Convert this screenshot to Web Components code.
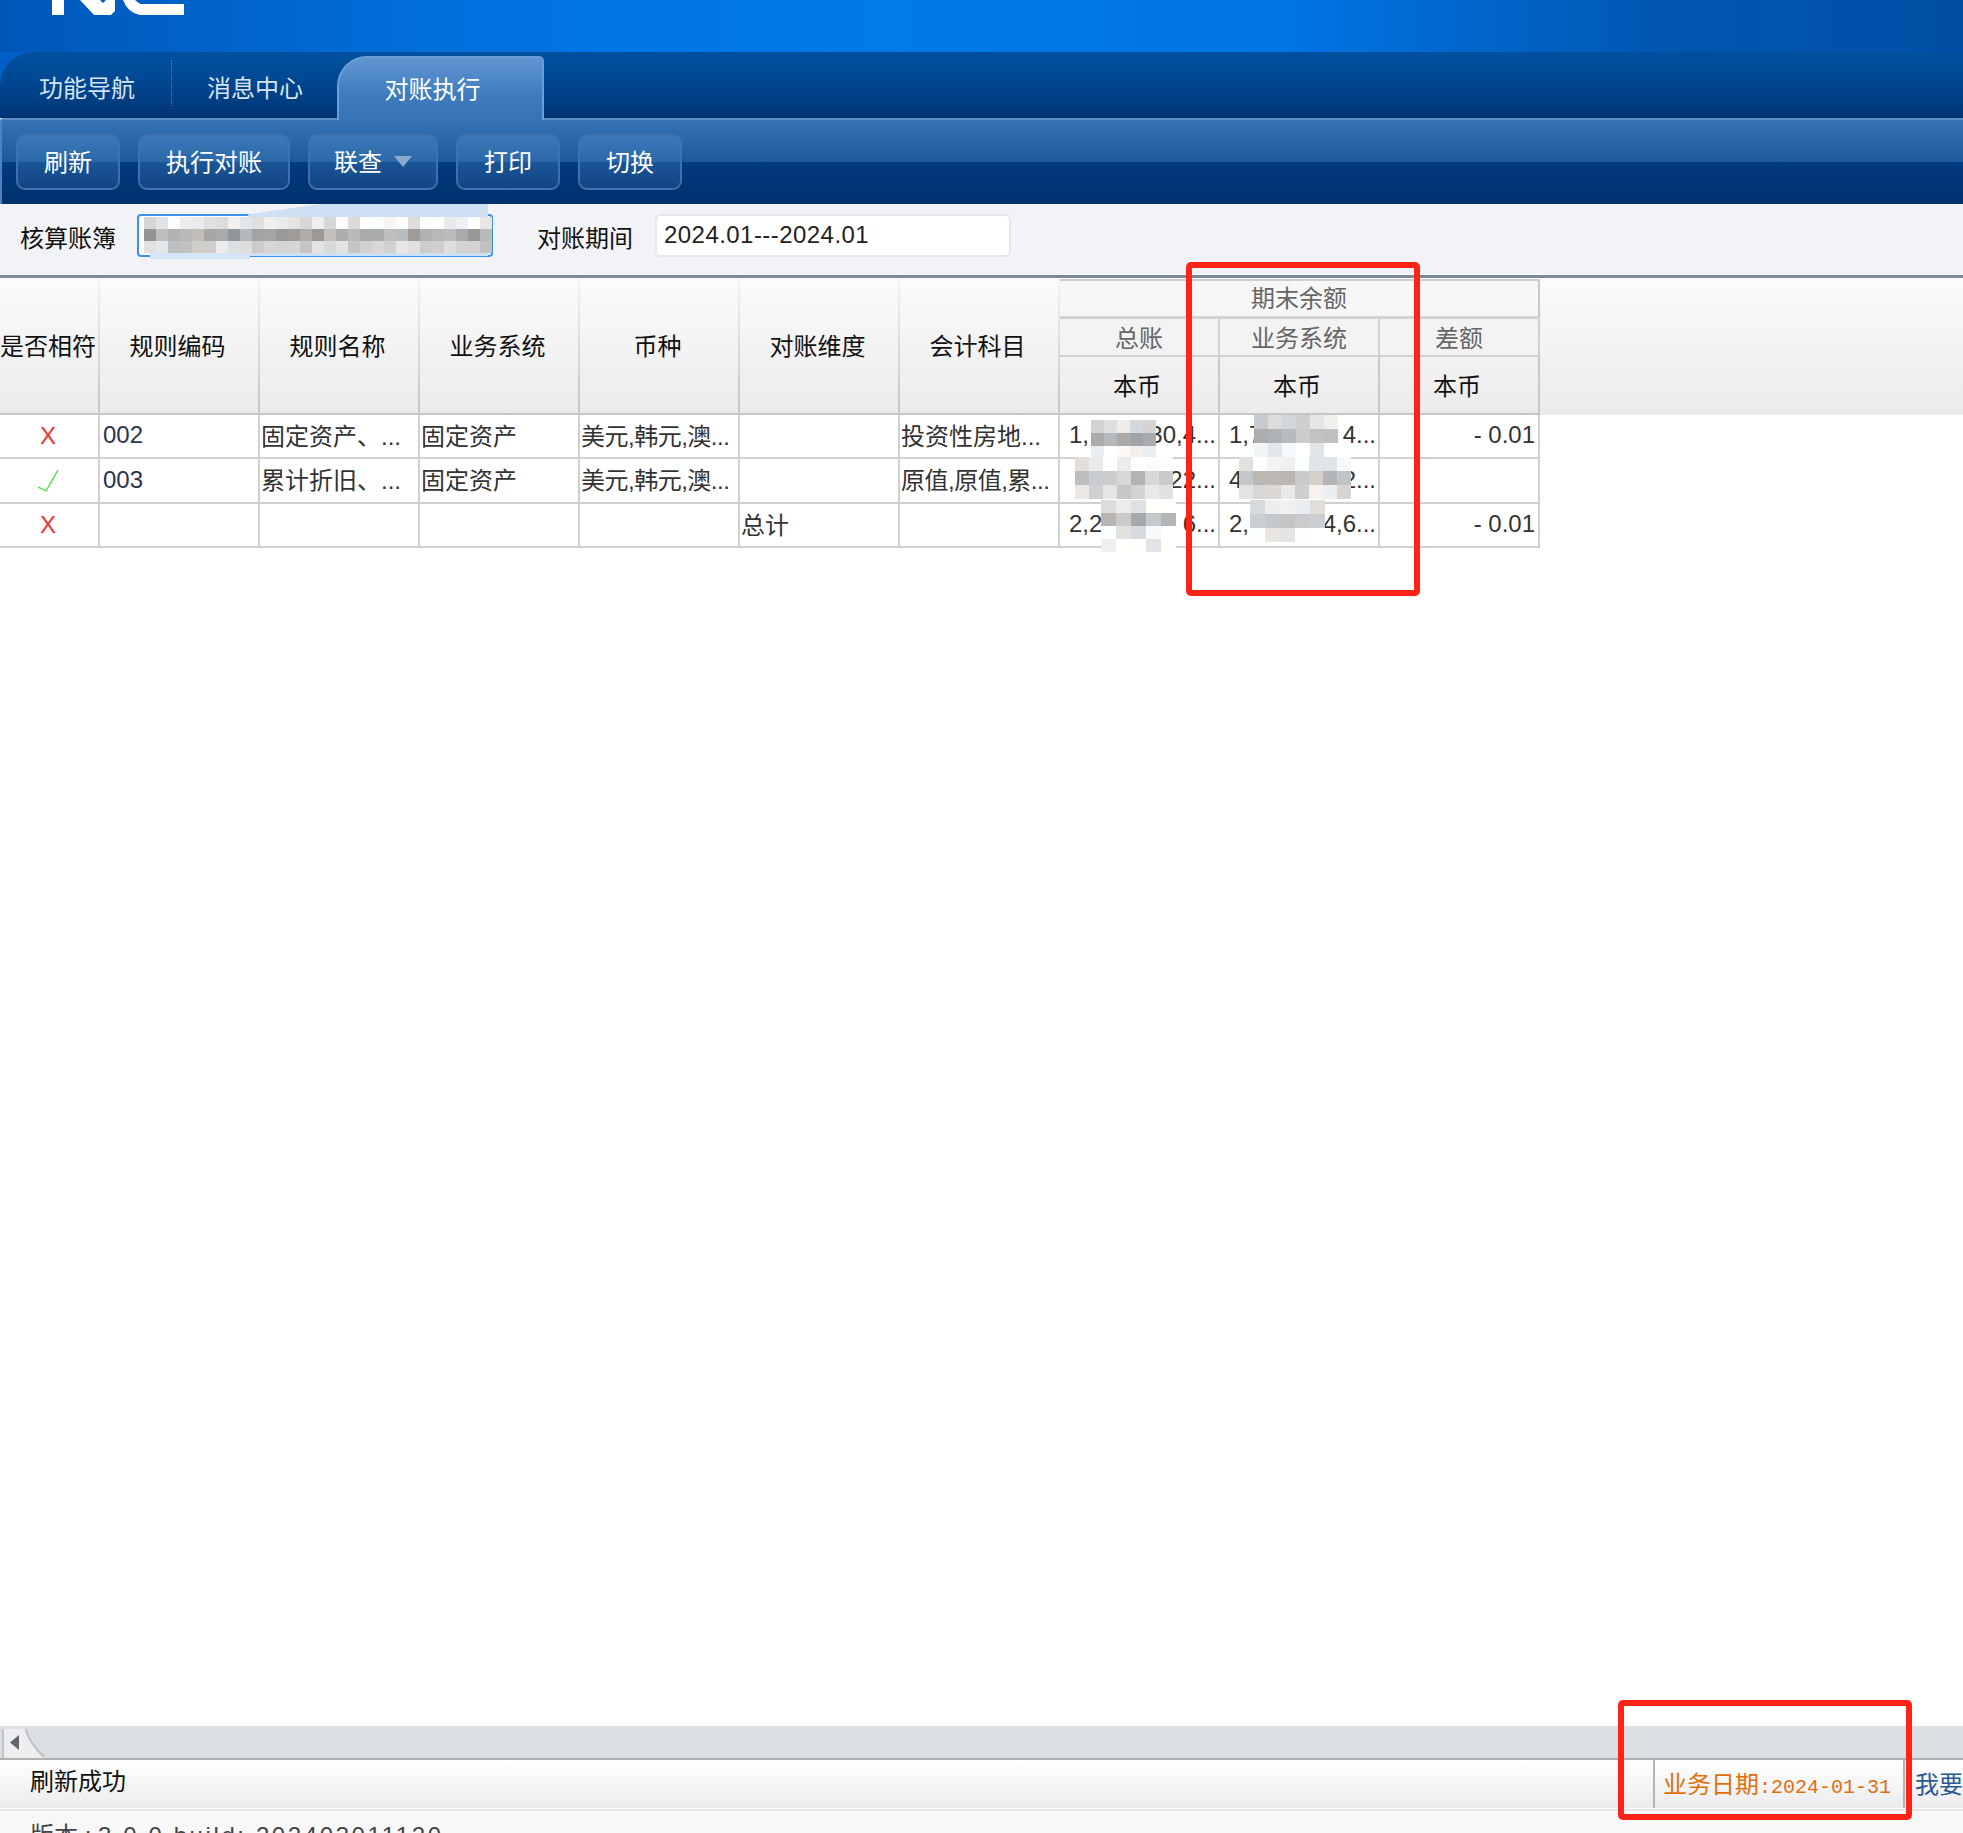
<!DOCTYPE html>
<html lang="zh"><head><meta charset="utf-8"><title>对账执行</title>
<style>
html,body{margin:0;padding:0;background:#fff;overflow:hidden}
body{font:24px "Liberation Sans","Noto Sans CJK SC",sans-serif;color:#222}
</style></head><body>
<nc-app>
  <nc-banner></nc-banner>
  <nc-tabs>
    <nc-tab style="margin-left:39px">功能导航</nc-tab>
    <nc-tab-sep></nc-tab-sep>
    <nc-tab>消息中心</nc-tab>
    <nc-tab active>对账执行</nc-tab>
  </nc-tabs>
  <nc-toolbar>
    <nc-btn w="104">刷新</nc-btn>
    <nc-btn w="152">执行对账</nc-btn>
    <nc-btn w="130" menu>联查</nc-btn>
    <nc-btn w="104">打印</nc-btn>
    <nc-btn w="104">切换</nc-btn>
  </nc-toolbar>
  <nc-filter></nc-filter>
  <nc-table></nc-table>
  <nc-scroll></nc-scroll>
  <nc-status></nc-status>
  <nc-foot></nc-foot>
  <nc-annot style="left:1186px;top:262px;width:234px;height:334px"></nc-annot>
  <nc-annot style="left:1618px;top:1700px;width:294px;height:120px"></nc-annot>
</nc-app>
<script>
const FONT='"Liberation Sans","Noto Sans CJK SC",sans-serif';
function def(name,html,extra){
  customElements.define(name,class extends HTMLElement{
    constructor(){super();const s=this.attachShadow({mode:'open'});s.innerHTML=typeof html==='function'?html(this):html;}
    connectedCallback(){if(extra)extra(this);}
  });
}
def('nc-app',`<style>:host{display:flex;flex-direction:column;position:relative;width:1963px;height:1833px;overflow:hidden;font:24px ${FONT}}</style><slot></slot>`);

def('nc-banner',`<style>:host{display:block;flex:none;height:52px;background:linear-gradient(90deg,#0057b8 0%,#0072e0 25%,#007be9 45%,#0074e4 66%,#0056b0 85%,#004fa4 100%)}
svg{display:block}</style>
<svg width="200" height="16" viewBox="0 0 200 16" role="img" aria-label="NC"><path fill="#fff" d="M52 0h12v15H52zM80 0h20l3 3 3-3h9v11l-4 4H94zM123 0h12q3 3 6 4h43v11h-44Q128 13 123 0z"/></svg>`);

def('nc-tabs',`<style>:host{display:flex;flex:none;height:66px;align-items:stretch;position:relative;z-index:1;background:#0060c8}
.b{display:flex;flex:1;align-items:stretch;border-top-left-radius:34px;background:linear-gradient(180deg,#00509f 0%,#004a96 35%,#003574 100%)}</style>
<div class="b"><slot></slot></div>`);

def('nc-tab',`<style>:host{display:flex;width:96px;align-items:center;justify-content:center;color:#d5e3f4;padding-top:2px;box-sizing:border-box}
:host([active]){width:207px;margin-left:34px;margin-top:4px;margin-bottom:-2px;padding:0 16px 3px 0;color:#fff;border:2px solid #6a9ed6;border-bottom:0;border-radius:30px 5px 0 0;background:linear-gradient(180deg,#5f96d2 0%,#3f7cbd 60%,#3673b5 100%)}
</style><slot></slot>`);

def('nc-tab-sep',`<style>:host{display:block;width:0;height:46px;margin:8px 35px 0 36px;border-left:1px dotted #4f83bd}</style>`);

def('nc-toolbar',`<style>:host{display:flex;flex:none;box-sizing:border-box;height:86px;padding:14px 0 0 14px;gap:18px;border-top:2px solid #5b8fc8;border-left:2px solid #4c82bd;border-top-left-radius:3px;
background:linear-gradient(180deg,#3673b5 0,#1d5a9c 42px,#003c80 42px,#00306c 84px)}
</style><slot></slot>`);

def('nc-btn',(el)=>`<style>:host{display:flex;box-sizing:border-box;height:56px;width:${el.getAttribute('w')}px;align-items:center;justify-content:center;gap:12px;color:#fff;border:2px solid #3c72ad;border-radius:9px;padding-bottom:4px;
background:linear-gradient(180deg,#3a78b8 0,#2a68a9 26px,#1b5597 26px,#124584 100%)}
svg{display:block;margin-top:2px}</style><slot></slot>${el.hasAttribute('menu')?'<svg width="18" height="11" viewBox="0 0 18 11"><path d="M0 0h18L9 11z" fill="#8fa9cc"/></svg>':''}`);

def('nc-filter',`<style>:host{display:block;flex:none;position:relative;height:74px;box-sizing:border-box;background:linear-gradient(180deg,#f1f3f7 0,#f1f3f7 70px,#fff 70px,#fff 71px,#7b8a99 71px)}
.r{display:flex;align-items:center;height:70px;box-sizing:border-box;padding:0 0 7px 20px}
label{width:96px;color:#111;padding-top:2px}
.a{width:356px;height:43px;margin-left:21px;margin-right:44px;box-sizing:border-box;border:2px solid #3a90ee;border-radius:4px;background:#fff}
.p{width:356px;height:43px;margin-left:22px;box-sizing:border-box;border:2px solid #e6e7ea;border-radius:6px;background:#fff;padding-left:7px;line-height:38px;letter-spacing:.45px;color:#222}
.smear{position:absolute;left:248px;top:0;width:240px;height:52px;background:#cfe0f5;clip-path:polygon(30% 0,100% 0,100% 100%,0 100%,0 20%)}
.smear2{position:absolute;left:150px;top:36px;width:100px;height:19px;background:#d5e5f8}
</style>
<div class="r"><label>核算账簿</label><div class="a"></div><label>对账期间</label><div class="p">2024.01---2024.01</div></div>
<div class="smear"></div><div class="smear2"></div>
<nc-mosaic style="left:144px;top:13px" cols="29" rows="3" cw="12" ch="12" tones="236,170,214" seed="11" halo="transparent"></nc-mosaic>`);

def('nc-mosaic',(el)=>{
  const c=+el.getAttribute('cols'),r=+el.getAttribute('rows'),cw=+el.getAttribute('cw')||14,ch=+el.getAttribute('ch')||13;
  const tones=(el.getAttribute('tones')||'225,190,225').split(',').map(Number);
  let s=+el.getAttribute('seed')||1;const rnd=()=>{s=(s*16807)%2147483647;return s/2147483647;};
  let cells='';
  for(let y=0;y<r;y++)for(let x=0;x<c;x++){
    const t=tones[y%tones.length];const g=Math.max(70,Math.min(255,Math.round(t+(rnd()-.5)*44)));
    const tint=Math.round((rnd()-.5)*8);
    cells+=`<i style="background:rgb(${Math.min(255,g+tint)},${g},${Math.min(255,g-tint)})"></i>`;
  }
  return `<style>:host{position:absolute;display:grid;grid-template-columns:repeat(${c},${cw}px);grid-auto-rows:${ch}px;background:${el.getAttribute('halo')||'#f5f5f5'}}i{display:block}</style>${cells}`;
});

const CHECK='<svg width="21" height="22" viewBox="0 0 21 22" role="img" aria-label="相符"><path d="M0 17l8 4L20 0" fill="none" stroke="#3ee03e" stroke-width="1.3"/></svg>';
const rows=[
 {h:44,c:['X','002','固定资产、...','固定资产','美元,韩元,澳...','','投资性房地...',['1,','30,4...'],['1,7','4...'],'- 0.01']},
 {h:45,c:['V','003','累计折旧、...','固定资产','美元,韩元,澳...','','原值,原值,累...',['','22...'],['4','2...'],'']},
 {h:44,c:['X','','','','','总计','',['2,2','6...'],['2,','04,6...'],'- 0.01']}
];
def('nc-table',()=>{
  let head='';
  ['是否相符','规则编码','规则名称','业务系统','币种','对账维度','会计科目'].forEach((t,i)=>{
    head+=`<div class="hm" style="grid-column:${i+1};grid-row:1/4">${t}</div>`;
  });
  head+=`<div class="g1" style="grid-column:8/11;grid-row:1">期末余额</div>`;
  ['总账','业务系统','差额'].forEach((t,i)=>head+=`<div class="g2" style="grid-column:${8+i};grid-row:2">${t}</div>`);
  ['本币','本币','本币'].forEach((t,i)=>head+=`<div class="g3" style="grid-column:${8+i};grid-row:3">${t}</div>`);
  let body='';
  rows.forEach(r=>{
    let row='';
    r.c.forEach((v,i)=>{
      let inner=v,cl='c';
      if(i===0){cl+=' m';inner=v==='X'?'<span class="x">X</span>':CHECK;}
      else if(Array.isArray(v)){cl+=' n';inner=`<span>${v[0]}</span><span>${v[1]}</span>`;}
      else if(i===9){cl+=' rt';}
      else if(i===1){cl+=' code';}
      if(typeof v==='string'&&v.includes(',')&&i!==9)cl+=' tight';
      row+=`<div class="${cl}">${inner}</div>`;
    });
    body+=`<div class="row" style="height:${r.h}px">${row}</div>`;
  });
  return `<style>
:host{display:block;flex:1;position:relative;background:#fff;min-height:0;overflow:hidden}
.head{display:grid;grid-template-columns:100px repeat(9,160px) 1fr;grid-template-rows:41px 38px 58px;height:137px;background:linear-gradient(180deg,#fbfbfb 0,#ebebeb 100%);}
.hm{display:flex;align-items:center;justify-content:center;color:#111;box-sizing:border-box;padding:0 3px 4px 0;border-right:2px solid;border-image:linear-gradient(180deg,#f4f4f4 0,#c8c8c8 90%) 1;white-space:nowrap;box-shadow:inset 0 -2px 0 #c6c6c6}
.hm:first-child{justify-content:flex-start;padding-left:0}
.g1{display:flex;align-items:center;justify-content:center;color:#666;border-top:2px solid #cfcfcf;border-bottom:3px solid #d2d2d2;border-right:2px solid #c8c8c8;box-sizing:border-box;background:#f7f7f7;margin-top:1px;padding-bottom:4px}
.g2{display:flex;align-items:center;justify-content:center;color:#666;border-bottom:2px solid #d0d0d0;border-right:2px solid #d0d0d0;box-sizing:border-box;background:#f3f3f3;padding-bottom:1px}
.g3{display:flex;align-items:center;justify-content:center;color:#111;border-right:2px solid #c8c8c8;box-sizing:border-box;box-shadow:inset 0 -2px 0 #c6c6c6;padding:0 4px 4px 0}
.row{display:grid;grid-template-columns:100px repeat(9,160px);width:1540px;box-sizing:border-box;border-bottom:2px solid #d0d0d0;color:#333}
.c{display:flex;align-items:center;box-sizing:border-box;border-right:2px solid #cfcfcf;padding:0 0 4px 1px;white-space:nowrap;overflow:hidden;min-width:0}
.m{justify-content:center;padding:0 2px 0 0}
.x{color:#f53030;font-size:24px;font-family:"Liberation Sans",sans-serif}
.code{padding:0 0 2px 3px;color:#2a3350}
.tight{letter-spacing:-.5px}
.n{justify-content:space-between;padding:0 2px 2px 9px}
.rt{justify-content:flex-end;padding:0 3px 2px 0}
svg{display:block}
</style>
<div class="head">${head}</div>${body}
<nc-mosaic style="left:1091px;top:142px" cols="5" rows="3" cw="13" ch="13" tones="232,186,248" seed="3"></nc-mosaic>
<nc-mosaic style="left:1075px;top:179px" cols="7" rows="3" cw="14" ch="14" tones="244,196,214" seed="7"></nc-mosaic>
<nc-mosaic style="left:1101px;top:222px" cols="5" rows="4" cw="15" ch="13" tones="242,190,238,248" seed="19"></nc-mosaic>
<nc-mosaic style="left:1254px;top:137px" cols="6" rows="3" cw="14" ch="14" tones="225,190,248" seed="23"></nc-mosaic>
<nc-mosaic style="left:1239px;top:179px" cols="8" rows="3" cw="14" ch="14" tones="246,200,222" seed="29"></nc-mosaic>
<nc-mosaic style="left:1250px;top:222px" cols="5" rows="3" cw="15" ch="14" tones="240,190,240" seed="31"></nc-mosaic>`;
});

def('nc-scroll',`<style>:host{display:flex;flex:none;height:34px;box-sizing:border-box;background:#dcdfe3;border-bottom:2px solid #b0b0b0;padding:3px 0 0 2px;align-items:flex-start}svg{display:block}</style>
<svg width="46" height="29" viewBox="0 0 46 29"><path d="M1 0h24q2 12 18 29H1z" fill="#eceef0"/><path d="M1 0v29" stroke="#b8b8b8" stroke-width="1.5"/><path d="M24 0q2 12 18 28" fill="none" stroke="#bfc1c5" stroke-width="2"/><path d="M17 6v15L8 13.500z" fill="#666"/></svg>`);

def('nc-status',`<style>:host{display:flex;flex:none;align-items:stretch;height:48px;box-sizing:border-box;background:linear-gradient(180deg,#fff,#ececee);white-space:nowrap;overflow:hidden}
.t{flex:1;padding-left:30px;line-height:44px;color:#111}
.d{width:252px;box-sizing:border-box;border-left:2px solid #b4b4b4;border-right:2px solid #b4b4b4;padding-left:8px;color:#e0700c;line-height:50px;height:48px}
.d span{font:400 20px "Liberation Mono",monospace}
.l{width:58px;box-sizing:border-box;padding-left:10px;color:#2a5a95;line-height:50px;overflow:hidden}
</style><div class="t">刷新成功</div><div class="d">业务日期<span>:2024-01-31</span></div><div class="l">我要</div>`);

def('nc-foot',`<style>:host{display:block;flex:none;height:25px;overflow:hidden;box-sizing:border-box;background:linear-gradient(180deg,#fff 0,#fff 1px,#e4e4e4 1px,#e4e4e4 3px,#f8f8f8 3px);padding:14px 0 0 30px;line-height:28px;white-space:nowrap;color:#444}
span{letter-spacing:2.6px}</style>版本 : <span>3.0.0.build: 202403011120</span>`);

def('nc-annot',`<style>:host{position:absolute;box-sizing:border-box;border:6px solid #ff2216;border-radius:5px;pointer-events:none;z-index:5}</style>`);
</script>
</body></html>
